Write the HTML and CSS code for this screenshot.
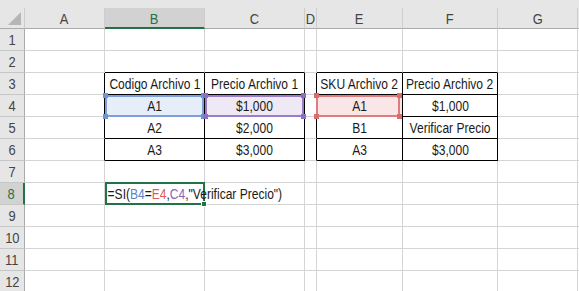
FILE: index.html
```html
<!DOCTYPE html>
<html lang="es">
<head>
<meta charset="utf-8">
<title>Hoja</title>
<link rel="stylesheet" href="styles.css">
</head>
<body>
<div class="sheet">
  <!-- header row -->
  <div class="ch corner"><span class="tri"></span></div>
  <div class="ch"><span class="s">A</span></div>
  <div class="ch sel"><span class="s">B</span></div>
  <div class="ch"><span class="s">C</span></div>
  <div class="ch"><span class="s">D</span></div>
  <div class="ch"><span class="s">E</span></div>
  <div class="ch"><span class="s">F</span></div>
  <div class="ch"><span class="s">G</span></div>
  <div class="ch"></div>

  <!-- row 1 -->
  <div class="rh"><span class="s">1</span></div>
  <div class="c"></div><div class="c"></div><div class="c"></div><div class="c"></div><div class="c"></div><div class="c"></div><div class="c"></div><div class="c"></div>
  <!-- row 2 -->
  <div class="rh"><span class="s">2</span></div>
  <div class="c"></div><div class="c tt"></div><div class="c tt"></div><div class="c"></div><div class="c tt"></div><div class="c tt"></div><div class="c"></div><div class="c"></div>
  <!-- row 3 -->
  <div class="rh"><span class="s">3</span></div>
  <div class="c tl"></div>
  <div class="c t"><span class="s">Codigo Archivo 1</span></div>
  <div class="c t"><span class="s">Precio Archivo 1</span></div>
  <div class="c tl"></div>
  <div class="c t"><span class="s">SKU Archivo 2</span></div>
  <div class="c t"><span class="s">Precio Archivo 2</span></div>
  <div class="c"></div><div class="c"></div>
  <!-- row 4 -->
  <div class="rh"><span class="s">4</span></div>
  <div class="c tl"></div>
  <div class="c t hl blue"><span class="box"><i class="k tl1"></i><i class="k tr1"></i><i class="k bl1"></i><i class="k br1"></i></span><span class="s">A1</span></div>
  <div class="c t hl purple"><span class="box"><i class="k tl1"></i><i class="k tr1"></i><i class="k bl1"></i><i class="k br1"></i></span><span class="s">$1,000</span></div>
  <div class="c tl"></div>
  <div class="c t hl red"><span class="box"><i class="k tl1"></i><i class="k tr1"></i><i class="k bl1"></i><i class="k br1"></i></span><span class="s">A1</span></div>
  <div class="c t"><span class="s">$1,000</span></div>
  <div class="c"></div><div class="c"></div>
  <!-- row 5 -->
  <div class="rh"><span class="s">5</span></div>
  <div class="c tl"></div>
  <div class="c t"><span class="s">A2</span></div>
  <div class="c t"><span class="s">$2,000</span></div>
  <div class="c tl"></div>
  <div class="c t"><span class="s">B1</span></div>
  <div class="c t"><span class="s">Verificar Precio</span></div>
  <div class="c"></div><div class="c"></div>
  <!-- row 6 -->
  <div class="rh"><span class="s">6</span></div>
  <div class="c tl"></div>
  <div class="c t"><span class="s">A3</span></div>
  <div class="c t"><span class="s">$3,000</span></div>
  <div class="c tl"></div>
  <div class="c t"><span class="s">A3</span></div>
  <div class="c t"><span class="s">$3,000</span></div>
  <div class="c"></div><div class="c"></div>
  <!-- row 7 -->
  <div class="rh"><span class="s">7</span></div>
  <div class="c"></div><div class="c"></div><div class="c"></div><div class="c"></div><div class="c"></div><div class="c"></div><div class="c"></div><div class="c"></div>
  <!-- row 8 -->
  <div class="rh active"><span class="s">8</span></div>
  <div class="c"></div>
  <div class="c active-cell"><span class="selbox"><i class="handle"></i></span><span class="s f">=SI(<b class="fb">B4</b>=<b class="fr">E4</b>,<b class="fp">C4</b>,"Verificar Precio")</span></div>
  <div class="c"></div><div class="c"></div><div class="c"></div><div class="c"></div><div class="c"></div><div class="c"></div>
  <!-- row 9 -->
  <div class="rh"><span class="s">9</span></div>
  <div class="c"></div><div class="c"></div><div class="c"></div><div class="c"></div><div class="c"></div><div class="c"></div><div class="c"></div><div class="c"></div>
  <!-- row 10 -->
  <div class="rh"><span class="s">10</span></div>
  <div class="c"></div><div class="c"></div><div class="c"></div><div class="c"></div><div class="c"></div><div class="c"></div><div class="c"></div><div class="c"></div>
  <!-- row 11 -->
  <div class="rh"><span class="s">11</span></div>
  <div class="c"></div><div class="c"></div><div class="c"></div><div class="c"></div><div class="c"></div><div class="c"></div><div class="c"></div><div class="c"></div>
  <!-- row 12 -->
  <div class="rh"><span class="s">12</span></div>
  <div class="c"></div><div class="c"></div><div class="c"></div><div class="c"></div><div class="c"></div><div class="c"></div><div class="c"></div><div class="c"></div>
</div>
</body>
</html>
```
FILE: styles.css
```css
* { box-sizing: border-box; }
html, body { margin: 0; padding: 0; }
body {
  background: #e6e6e6;
  padding-top: 8px;
  width: 579px;
  height: 291px;
  overflow: hidden;
  font-family: "Liberation Sans", Arial, sans-serif;
}
.sheet {
  display: grid;
  grid-template-columns: 25px 80px 100px 100px 12px 86px 95px 80px 20px;
  grid-template-rows: 21px repeat(12, 22px);
  background: #fff;
  width: 598px;
}
.s {
  display: inline-block;
  transform: scaleX(0.86);
  white-space: nowrap;
  position: relative;
  z-index: 1;
}
.ch {
  background: #e6e6e6;
  border-right: 1px solid #cdcdcd;
  border-bottom: 1px solid #ababab;
  display: flex;
  align-items: center;
  justify-content: center;
  font-size: 15px;
  color: #444;
  padding-top: 1px;
}
.ch.sel {
  background: #d2d2d2;
  color: #217346;
  border-bottom: 2px solid #217346;
  padding-top: 2px;
}
.corner { position: relative; }
.tri {
  position: absolute;
  right: 3px;
  bottom: 3px;
  width: 0;
  height: 0;
  border-left: 13px solid transparent;
  border-bottom: 13px solid #b5b5b5;
}
.rh {
  background: #e6e6e6;
  border-right: 1px solid #ababab;
  border-bottom: 1px solid #c6c6c6;
  display: flex;
  align-items: center;
  justify-content: center;
  font-size: 15px;
  color: #444;
}
.rh.active {
  background: #d2d2d2;
  color: #217346;
  border-right: 2px solid #217346;
}
.c {
  border-right: 1px solid #d4d4d4;
  border-bottom: 1px solid #d4d4d4;
  display: flex;
  align-items: center;
  justify-content: center;
  font-size: 14px;
  color: #1a1a1a;
  position: relative;
}
.c.tt { border-bottom-color: #000; }
.c.tl { border-right-color: #000; }
.c.t { border-right-color: #000; border-bottom-color: #000; }

.hl.blue { background: #e6eef9; }
.hl.purple { background: #eee9f5; }
.hl.red { background: #fae6e6; }
.box {
  position: absolute;
  left: 0;
  top: 0;
  right: 0;
  bottom: -1px;
  border: 2px solid;
  z-index: 2;
}
.blue .box { border-color: #7f9fd8; color: #7093d2; }
.purple .box { border-color: #9a7dc8; color: #8e6ec0; }
.red .box { border-color: #e07c7c; color: #da6c6c; }
.red .box { left: -1px; right: 2px; }
.k {
  position: absolute;
  width: 5px;
  height: 5px;
  background: currentColor;
}
.tl1 { left: -4px; top: -4px; }
.tr1 { right: -4px; top: -4px; }
.bl1 { left: -4px; bottom: -4px; }
.br1 { right: -4px; bottom: -4px; }

.active-cell {
  justify-content: flex-start;
  overflow: visible;
  z-index: 3;
}
.selbox {
  position: absolute;
  left: 0;
  top: -1px;
  right: -1px;
  bottom: -1px;
  border: 2px solid #217346;
}
.handle {
  position: absolute;
  right: -4px;
  bottom: -4px;
  width: 6px;
  height: 6px;
  background: #217346;
  border: 1px solid #fff;
}
.f {
  transform-origin: left center;
  padding-left: 3px;
  font-weight: normal;
}
.f b { font-weight: normal; }
.fb { color: #5b85cc; }
.fr { color: #df5a5a; }
.fp { color: #8a64bd; }
```
